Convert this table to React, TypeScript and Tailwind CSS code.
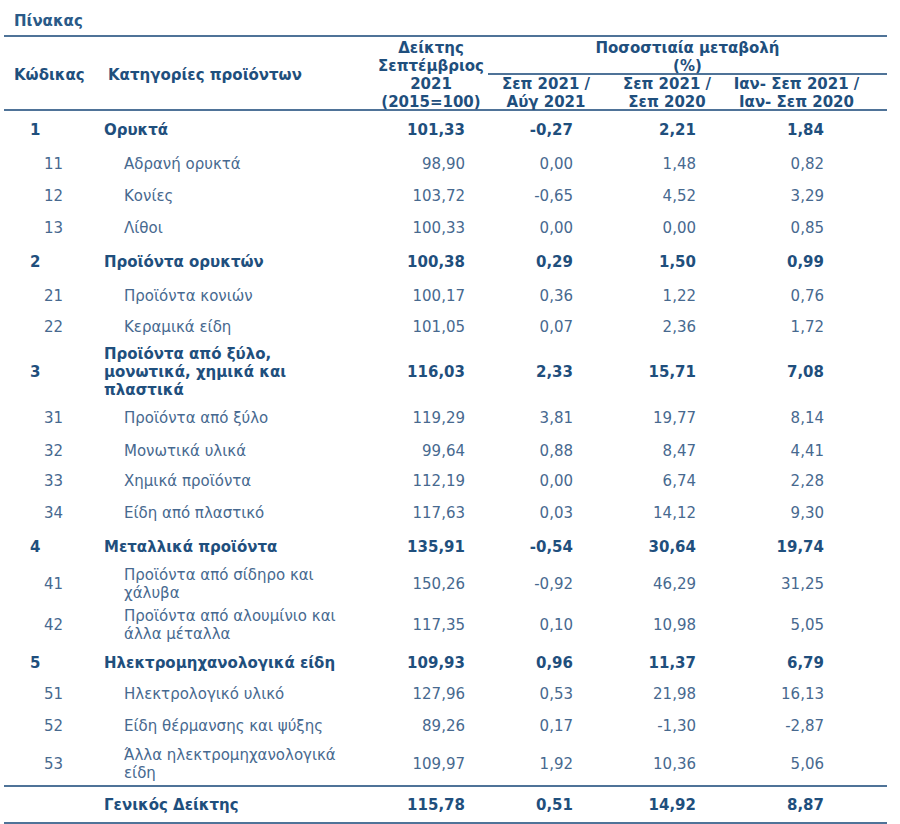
import React from 'react';

type Row = {
  code: string;
  name: React.ReactNode;
  idx: string;
  m1: string;
  m2: string;
  m3: string;
  bold?: boolean;
  h: string;
};

const rows: Row[] = [
  { code: '1', name: 'Ορυκτά', idx: '101,33', m1: '-0,27', m2: '2,21', m3: '1,84', bold: true, h: 'h-[35px]' },
  { code: '11', name: 'Αδρανή ορυκτά', idx: '98,90', m1: '0,00', m2: '1,48', m3: '0,82', h: 'h-[33px]' },
  { code: '12', name: 'Κονίες', idx: '103,72', m1: '-0,65', m2: '4,52', m3: '3,29', h: 'h-[31px]' },
  { code: '13', name: 'Λίθοι', idx: '100,33', m1: '0,00', m2: '0,00', m3: '0,85', h: 'h-[32px]' },
  { code: '2', name: 'Προϊόντα ορυκτών', idx: '100,38', m1: '0,29', m2: '1,50', m3: '0,99', bold: true, h: 'h-[36px]' },
  { code: '21', name: 'Προϊόντα κονιών', idx: '100,17', m1: '0,36', m2: '1,22', m3: '0,76', h: 'h-[32px]' },
  { code: '22', name: 'Κεραμικά είδη', idx: '101,05', m1: '0,07', m2: '2,36', m3: '1,72', h: 'h-[31px]' },
  {
    code: '3',
    name: (
      <>
        Προϊόντα από ξύλο,
        <br />
        μονωτικά, χημικά και
        <br />
        πλαστικά
      </>
    ),
    idx: '116,03', m1: '2,33', m2: '15,71', m3: '7,08', bold: true, h: 'h-[58px]',
  },
  { code: '31', name: 'Προϊόντα από ξύλο', idx: '119,29', m1: '3,81', m2: '19,77', m3: '8,14', h: 'h-[35px]' },
  { code: '32', name: 'Μονωτικά υλικά', idx: '99,64', m1: '0,88', m2: '8,47', m3: '4,41', h: 'h-[30px]' },
  { code: '33', name: 'Χημικά προϊόντα', idx: '112,19', m1: '0,00', m2: '6,74', m3: '2,28', h: 'h-[31px]' },
  { code: '34', name: 'Είδη από πλαστικό', idx: '117,63', m1: '0,03', m2: '14,12', m3: '9,30', h: 'h-[32px]' },
  { code: '4', name: 'Μεταλλικά προϊόντα', idx: '135,91', m1: '-0,54', m2: '30,64', m3: '19,74', bold: true, h: 'h-[36px]' },
  {
    code: '41',
    name: (
      <>
        Προϊόντα από σίδηρο και
        <br />
        χάλυβα
      </>
    ),
    idx: '150,26', m1: '-0,92', m2: '46,29', m3: '31,25', h: 'h-[38px]',
  },
  {
    code: '42',
    name: (
      <>
        Προϊόντα από αλουμίνιο και
        <br />
        άλλα μέταλλα
      </>
    ),
    idx: '117,35', m1: '0,10', m2: '10,98', m3: '5,05', h: 'h-[44px]',
  },
  { code: '5', name: 'Ηλεκτρομηχανολογικά είδη', idx: '109,93', m1: '0,96', m2: '11,37', m3: '6,79', bold: true, h: 'h-[32px]' },
  { code: '51', name: 'Ηλεκτρολογικό υλικό', idx: '127,96', m1: '0,53', m2: '21,98', m3: '16,13', h: 'h-[31px]' },
  { code: '52', name: 'Είδη θέρμανσης και ψύξης', idx: '89,26', m1: '0,17', m2: '-1,30', m3: '-2,87', h: 'h-[32px]' },
  {
    code: '53',
    name: (
      <>
        Άλλα ηλεκτρομηχανολογικά
        <br />
        είδη
      </>
    ),
    idx: '109,97', m1: '1,92', m2: '10,36', m3: '5,06', h: 'h-[45px]',
  },
];

const cols = 'grid grid-cols-[96px_270px_110px_120px_120px_167px]';

export default function App() {
  return (
    <div className="bg-white w-[900px] h-[824px] font-['DejaVu_Sans',Verdana,sans-serif] text-[15px] leading-[18px]">
      <div className="pl-[14px] pt-[12px] h-[35px] font-bold text-[#2a5a88]">Πίνακας</div>
      <div className="ml-[4px] w-[883px]">
        {/* header */}
        <div className={`${cols} border-t-2 border-b-2 border-[#4f7398] h-[76px] font-bold text-[#1f4f7d]`}>
          <div className="flex items-center pl-[10px] pt-[2px]">Κώδικας</div>
          <div className="flex items-center pl-[8px] pt-[2px]">Κατηγορίες προϊόντων</div>
          <div className="flex items-center justify-center text-center pl-[12px] pt-[2px]">
            Δείκτης
            <br />
            Σεπτέμβριος
            <br />
            2021
            <br />
            (2015=100)
          </div>
          <div className="col-span-3 flex flex-col">
            <div className="h-[38px] flex items-center justify-center text-center border-b-2 border-[#4f7398] ml-[8px] pt-[3px]">
              Ποσοστιαία μεταβολή
              <br />
              (%)
            </div>
            <div className="grid grid-cols-[120px_120px_167px] flex-1 items-center text-center">
              <div className="pl-[12px]">
                Σεπ 2021 /
                <br />
                Αύγ 2021
              </div>
              <div className="pl-[14px]">
                Σεπ 2021 /
                <br />
                Σεπ 2020
              </div>
              <div className="pr-[14px]">
                Ιαν- Σεπ 2021 /
                <br />
                Ιαν- Σεπ 2020
              </div>
            </div>
          </div>
        </div>

        {rows.map((r) => (
          <div
            key={r.code}
            className={`${cols} ${r.h} items-center pt-[3px] ${r.bold ? 'font-bold text-[#1f4f7d]' : 'text-[#47698f]'}`}
          >
            <div className={r.bold ? 'pl-[26px]' : 'pl-[40px]'}>{r.code}</div>
            <div className={`whitespace-nowrap ${r.bold ? 'pl-[4px]' : 'pl-[24px]'}`}>{r.name}</div>
            <div className="text-right pr-[15px]">{r.idx}</div>
            <div className="text-right pr-[27px]">{r.m1}</div>
            <div className="text-right pr-[24px]">{r.m2}</div>
            <div className="text-right pr-[63px]">{r.m3}</div>
          </div>
        ))}

        {/* total */}
        <div className={`${cols} h-[39px] items-center font-bold text-[#1f4f7d] border-t-2 border-b-2 border-[#4f7398]`}>
          <div />
          <div className="pl-[4px]">Γενικός Δείκτης</div>
          <div className="text-right pr-[15px]">115,78</div>
          <div className="text-right pr-[27px]">0,51</div>
          <div className="text-right pr-[24px]">14,92</div>
          <div className="text-right pr-[63px]">8,87</div>
        </div>
      </div>
    </div>
  );
}
